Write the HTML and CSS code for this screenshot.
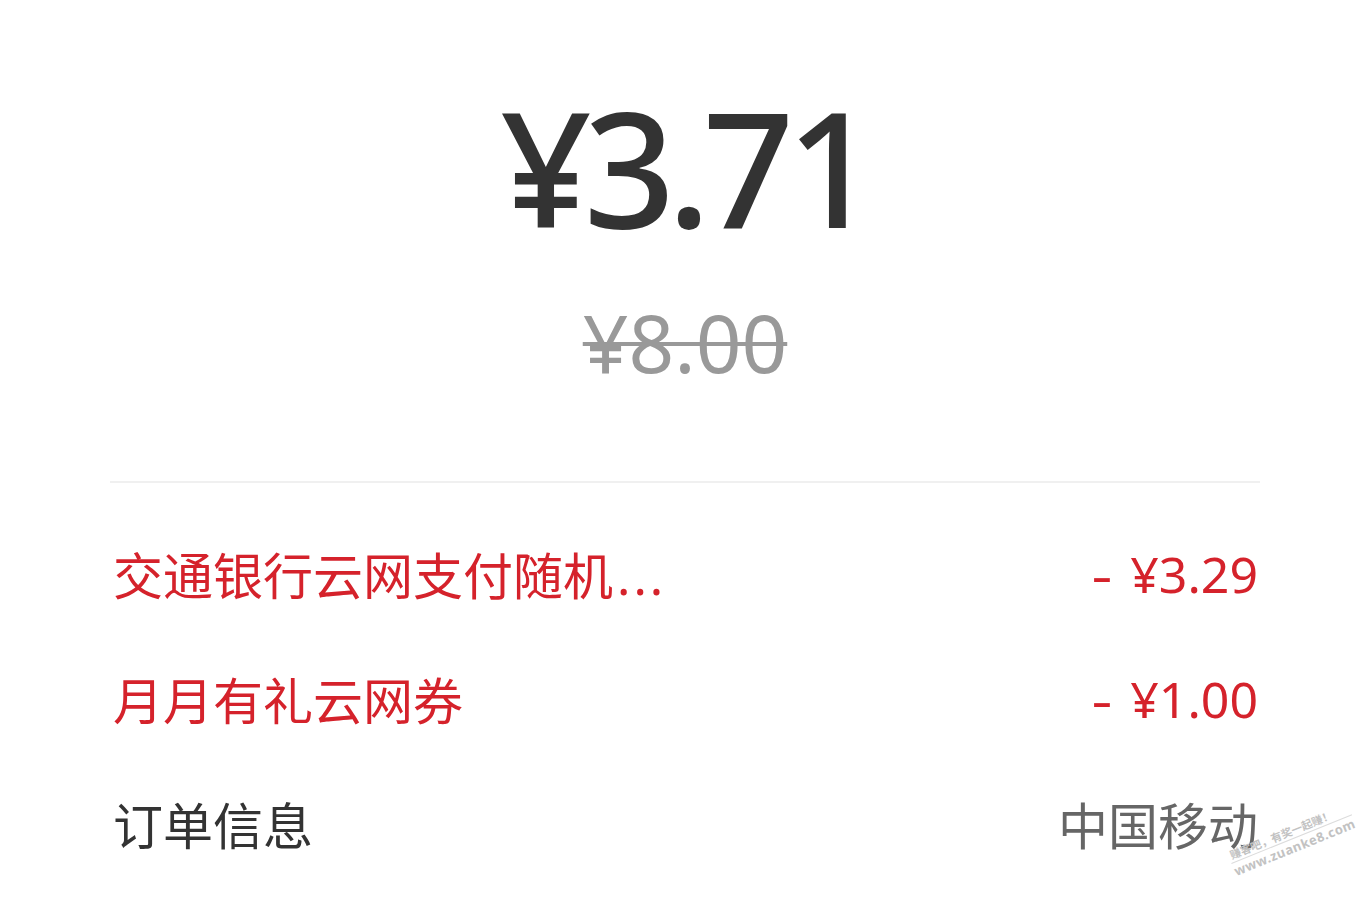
FILE: index.html
```html
<!DOCTYPE html>
<html lang="zh-CN">
<head>
  <meta charset="UTF-8" />
  <meta name="viewport" content="width=device-width, initial-scale=1.0"/>
  <title>订单支付</title>
  <link rel="stylesheet" href="styles.css">
</head>
<body>
  <div class="page">
    <div class="price">
      <div class="price-now">¥3.71</div>
      <div class="price-old">¥8.00</div>
    </div>

    <div class="divider"></div>

    <ul class="rows">
      <li class="row discount">
        <span class="label">交通银行云网支付随机<span class="dots">...</span></span>
        <span class="value"><span class="minus">-</span>¥3.29</span>
      </li>
      <li class="row discount">
        <span class="label">月月有礼云网券</span>
        <span class="value"><span class="minus">-</span>¥1.00</span>
      </li>
      <li class="row info">
        <span class="label">订单信息</span>
        <span class="value">中国移动</span>
      </li>
    </ul>

    <div class="watermark">
      <div class="wm-top">赚客吧，有奖一起赚！</div>
      <div class="wm-bottom">www.zuanke8.com</div>
    </div>
  </div>
</body>
</html>
```

FILE: styles.css
```css
body {
  margin: 0;
  padding: 0;
  background: #fff;
  font-family: "Noto Sans", "Noto Sans CJK SC", sans-serif;
  color: #333;
}

.page {
  position: relative;
  width: 1370px;
  height: 900px;
  overflow: hidden;
  padding: 0 110px;
  box-sizing: border-box;
}

.price {
  text-align: center;
  padding-top: 86px;
}

.price-now {
  font-size: 160px;
  font-weight: 500;
  line-height: 1;
  letter-spacing: -8px;
  color: #333;
}

.price-old {
  display: inline-block;
  margin-top: 56px;
  font-size: 80px;
  line-height: 1;
  color: #999;
  text-decoration: line-through;
  text-decoration-thickness: 4px;
}

.divider {
  height: 2px;
  background: #f0f0f0;
  margin-top: 99px;
}

.rows {
  list-style: none;
  margin: 28px 0 0;
  padding: 0 0 0 3px;
}

.row {
  display: flex;
  justify-content: space-between;
  align-items: center;
  height: 125px;
  font-size: 50px;
}

.row .value {
  padding-right: 2px;
}

.minus {
  display: inline-block;
  transform: scaleX(1.3);
  margin-right: 20px;
}

.dots {
  letter-spacing: 3px;
  padding-left: 4px;
}

.discount {
  color: #d5222b;
}

.info .label {
  color: #333;
}

.info .value {
  color: #666;
}

.watermark {
  position: absolute;
  left: 1226px;
  top: 850px;
  transform: rotate(-22deg);
  transform-origin: left top;
  color: #c2c2c2;
  font-size: 11px;
  line-height: 1.25;
  white-space: nowrap;
}

.wm-top {
  padding-left: 2px;
  border-bottom: 1px solid #dcdcdc;
  font-weight: bold;
}

.wm-bottom {
  font-size: 13px;
  font-weight: bold;
  letter-spacing: 0.5px;
}
```
